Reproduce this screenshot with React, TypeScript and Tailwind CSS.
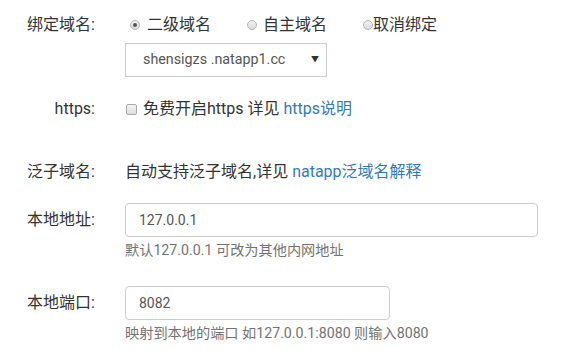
import React from "react";

const font = {
  fontFamily: 'Roboto, "Noto Sans CJK SC", sans-serif',
};

const Radio = ({ checked }: { checked?: boolean }) => (
  <span className="inline-flex h-[10px] w-[10px] items-center justify-center rounded-full border border-[#b5b5b5] bg-gradient-to-b from-[#f2f2f2] to-[#dcdcdc]">
    {checked && <span className="h-[4px] w-[4px] rounded-full bg-[#555]" />}
  </span>
);

const Label = ({ children }: { children: React.ReactNode }) => (
  <div className="w-[95px] shrink-0 text-right">{children}</div>
);

export default function App() {
  return (
    <div
      className="h-[350px] w-[561px] overflow-hidden bg-white text-[16px] text-[#333]"
      style={font}
    >
      <div className="flex flex-col pt-[14px]">
        {/* binding */}
        <div className="flex h-[22px] items-center">
          <Label>绑定域名:</Label>
          <div className="ml-[35px] flex items-center">
            <Radio checked />
            <span className="ml-[7px]">二级域名</span>
            <span className="ml-[36px]">
              <Radio />
            </span>
            <span className="ml-[6px]">自主域名</span>
            <span className="ml-[36px]">
              <Radio />
            </span>
            <span>取消绑定</span>
          </div>
        </div>

        <div className="ml-[125px] mt-[7px] flex h-[34px] w-[202px] items-center justify-between border border-[#ccc] pl-[17px] pr-[7px] text-[14.3px] text-[#555]">
          <span>shensigzs .natapp1.cc</span>
          <span className="text-[8px] text-[#333]">▼</span>
        </div>

        {/* https */}
        <div className="mt-[21px] flex h-[22px] items-center">
          <Label>https:</Label>
          <div className="ml-[31px] flex items-center">
            <span className="h-[11px] w-[11px] rounded-[2px] border border-[#a9a9a9] bg-gradient-to-b from-[#f4f4f4] to-[#dedede]" />
            <span className="ml-[6px]">免费开启https 详见</span>
            <span className="ml-[4px] text-[#337ab7]">https说明</span>
          </div>
        </div>

        {/* wildcard */}
        <div className="mt-[41px] flex h-[22px] items-center">
          <Label>泛子域名:</Label>
          <div className="ml-[30px]">
            自动支持泛子域名,详见{" "}
            <span className="text-[#337ab7]">natapp泛域名解释</span>
          </div>
        </div>

        {/* local address */}
        <div className="mt-[20px] flex items-center">
          <Label>本地地址:</Label>
          <div className="ml-[30px] flex h-[34px] w-[413px] items-center rounded-[4px] border border-[#ccc] px-[13px] text-[14px] text-[#555]">
            127.0.0.1
          </div>
        </div>
        <div className="ml-[125px] mt-[3px] text-[14.2px] leading-[20px] text-[#737373]">
          默认127.0.0.1 可改为其他内网地址
        </div>

        {/* local port */}
        <div className="mt-[26px] flex items-center">
          <Label>本地端口:</Label>
          <div className="ml-[30px] flex h-[34px] w-[265px] items-center rounded-[4px] border border-[#ccc] px-[13px] text-[14px] text-[#555]">
            8082
          </div>
        </div>
        <div className="ml-[125px] mt-[3px] text-[14.2px] leading-[20px] text-[#737373]">
          映射到本地的端口 如127.0.0.1:8080 则输入8080
        </div>
      </div>
    </div>
  );
}
